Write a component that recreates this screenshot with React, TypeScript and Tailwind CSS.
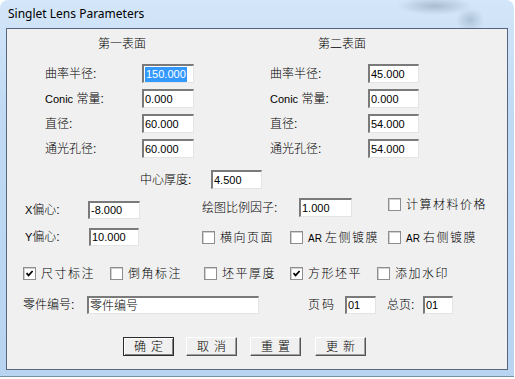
const ui = "font-['Liberation_Sans','Noto_Sans_CJK_SC',sans-serif] font-light"

function Field({ value, className, selected }: { value: string; className: string; selected?: boolean }) {
  return (
    <div
      className={`${className} shrink-0 bg-white border-t-2 border-l-2 border-t-[#7a7a7a] border-l-[#7a7a7a] border-b border-r border-b-[#e4e4e4] border-r-[#e4e4e4] flex items-center pl-[1px] text-[11px] font-normal leading-none text-black`}
    >
      {selected ? <span className="bg-[#3399ff] text-white px-[1px] py-[2px]">{value}</span> : <span>{value}</span>}
    </div>
  )
}

// latin prefix in labels is drawn a bit smaller than the CJK glyphs
function Lat({ children }: { children: string }) {
  return <span className="text-[11px] font-['Liberation_Sans',sans-serif] font-light">{children}</span>
}

function Check({ label, pre, checked, className = "" }: { label: string; pre?: string; checked?: boolean; className?: string }) {
  return (
    <div className={`${className} shrink-0 flex items-center gap-[5px] h-[13px]`}>
      <div className="w-[13px] h-[13px] shrink-0 border border-[#8e8e8e] bg-white shadow-[inset_1px_1px_0_#d0d0d0] flex items-center justify-center">
        {checked && (
          <svg width="9" height="9" viewBox="0 0 9 9">
            <path d="M1.5 4.2 L3.6 6.4 L7.6 2" fill="none" stroke="#000" strokeWidth="1.7" />
          </svg>
        )}
      </div>
      <span className="tracking-[1.5px] whitespace-nowrap leading-none">
        {pre && <span className="text-[10px] tracking-normal mr-[3px] font-['Liberation_Sans',sans-serif]">{pre}</span>}
        {label}
      </span>
    </div>
  )
}

function Btn({ label, primary, className = "" }: { label: string; primary?: boolean; className?: string }) {
  return (
    <div
      className={`${className} w-[51px] h-[19px] shrink-0 flex items-center justify-center bg-[#f0f0f0] border ${
        primary
          ? "border-[#2c2c2c] shadow-[inset_1px_1px_0_#fff,inset_-1px_-1px_0_#808080]"
          : "border-t-white border-l-white border-r-[#555] border-b-[#555] shadow-[inset_-1px_-1px_0_#a0a0a0]"
      } tracking-[5px] pl-[5px] text-[12px] leading-none`}
    >
      {label}
    </div>
  )
}

const surfaceRows = [
  ["曲率半径:", "150.000", "45.000"],
  ["常量:", "0.000", "0.000"],
  ["直径:", "60.000", "54.000"],
  ["通光孔径:", "60.000", "54.000"],
]

function RowLabel({ text, className }: { text: string; className: string }) {
  return (
    <span className={`${className} shrink-0`}>
      {text === "常量:" ? (
        <>
          <Lat>Conic</Lat> 常量:
        </>
      ) : (
        text
      )}
    </span>
  )
}

export default function App() {
  return (
    <div className="w-[515px] h-[379px] bg-white overflow-hidden">
      <div className="w-[514px] h-[377px] rounded-t-[8px] border-b border-[#7d8ea3] bg-[radial-gradient(ellipse_38px_9px_at_435px_6px,#a9bdd1,transparent),radial-gradient(ellipse_14px_12px_at_470px_20px,#aec3d8,transparent),linear-gradient(180deg,#d4e6f9_0%,#c0daf4_30%,#b8d4f1_100%)] flex flex-col">
        {/* title bar */}
        <div className="h-[28px] pl-[8px] flex items-center text-[12px] text-black font-['Segoe_UI','Noto_Sans',sans-serif]">
          Singlet Lens Parameters
        </div>

        <div className={`${ui} ml-[6px] w-[502px] h-[342px] border border-[#56677d] bg-[#f0f0f0] flex flex-col text-[12px] text-black`}>
          <div className="mt-[7px] h-[16px] flex items-center">
            <span className="ml-[91px] w-[48px]">第一表面</span>
            <span className="ml-[172px]">第二表面</span>
          </div>

          <div className="mt-[12px] flex flex-col gap-[6px]">
            {surfaceRows.map(([l, v1, v2], i) => (
              <div key={i} className="flex items-center h-[19px]">
                <RowLabel text={l} className="ml-[38px] w-[97px]" />
                <Field value={v1} className="w-[52px] h-[19px]" selected={i === 0} />
                <RowLabel text={l} className="ml-[76px] w-[98px]" />
                <Field value={v2} className="w-[51px] h-[19px]" />
              </div>
            ))}
          </div>

          <div className="mt-[12px] h-[19px] flex items-center">
            <span className="ml-[133px] w-[71px] shrink-0">中心厚度:</span>
            <Field value="4.500" className="w-[51px] h-[19px]" />
          </div>

          <div className="mt-[9px] h-[30px] flex items-start">
            <div className="ml-[18px] mt-[3px] h-[18px] flex items-center">
              <span className="w-[63px]"><Lat>X</Lat>偏心:</span>
              <Field value="-8.000" className="w-[52px] h-[18px]" />
            </div>
            <div className="ml-[62px] h-[19px] flex items-center">
              <span className="w-[97px]">绘图比例因子:</span>
              <Field value="1.000" className="w-[53px] h-[19px]" />
            </div>
            <Check label="计算材料价格" className="ml-[36px]" />
          </div>

          <div className="h-[22px] flex items-start">
            <div className="ml-[18px] h-[18px] flex items-center">
              <span className="w-[64px]"><Lat>Y</Lat>偏心:</span>
              <Field value="10.000" className="w-[50px] h-[18px]" />
            </div>
            <Check label="横向页面" className="ml-[63px] mt-[3px] w-[88px]" />
            <Check pre="AR" label="左侧镀膜" className="mt-[3px] w-[98px]" />
            <Check pre="AR" label="右侧镀膜" className="mt-[3px]" />
          </div>

          <div className="mt-[17px] h-[13px] flex items-center">
            <Check label="尺寸标注" checked className="ml-[16px] w-[87px]" />
            <Check label="倒角标注" className="w-[94px]" />
            <Check label="坯平厚度" className="w-[86px]" />
            <Check label="方形坯平" checked className="w-[87px]" />
            <Check label="添加水印" />
          </div>

          <div className="mt-[16px] h-[18px] flex items-center">
            <span className="ml-[16px] w-[64px] shrink-0">零件编号:</span>
            <Field value="零件编号" className="w-[172px] h-[18px] !text-[12px] !font-light" />
            <span className="ml-[49px] w-[37px] shrink-0 tracking-[2px]">页码</span>
            <Field value="01" className="w-[31px] h-[18px]" />
            <span className="ml-[11px] w-[36px] shrink-0">总页:</span>
            <Field value="01" className="w-[30px] h-[18px]" />
          </div>

          <div className="mt-[23px] h-[19px] flex items-center">
            <Btn label="确定" primary className="ml-[116px]" />
            <Btn label="取消" className="ml-[12px]" />
            <Btn label="重置" className="ml-[13px]" />
            <Btn label="更新" className="ml-[14px]" />
          </div>
        </div>
      </div>
    </div>
  )
}
